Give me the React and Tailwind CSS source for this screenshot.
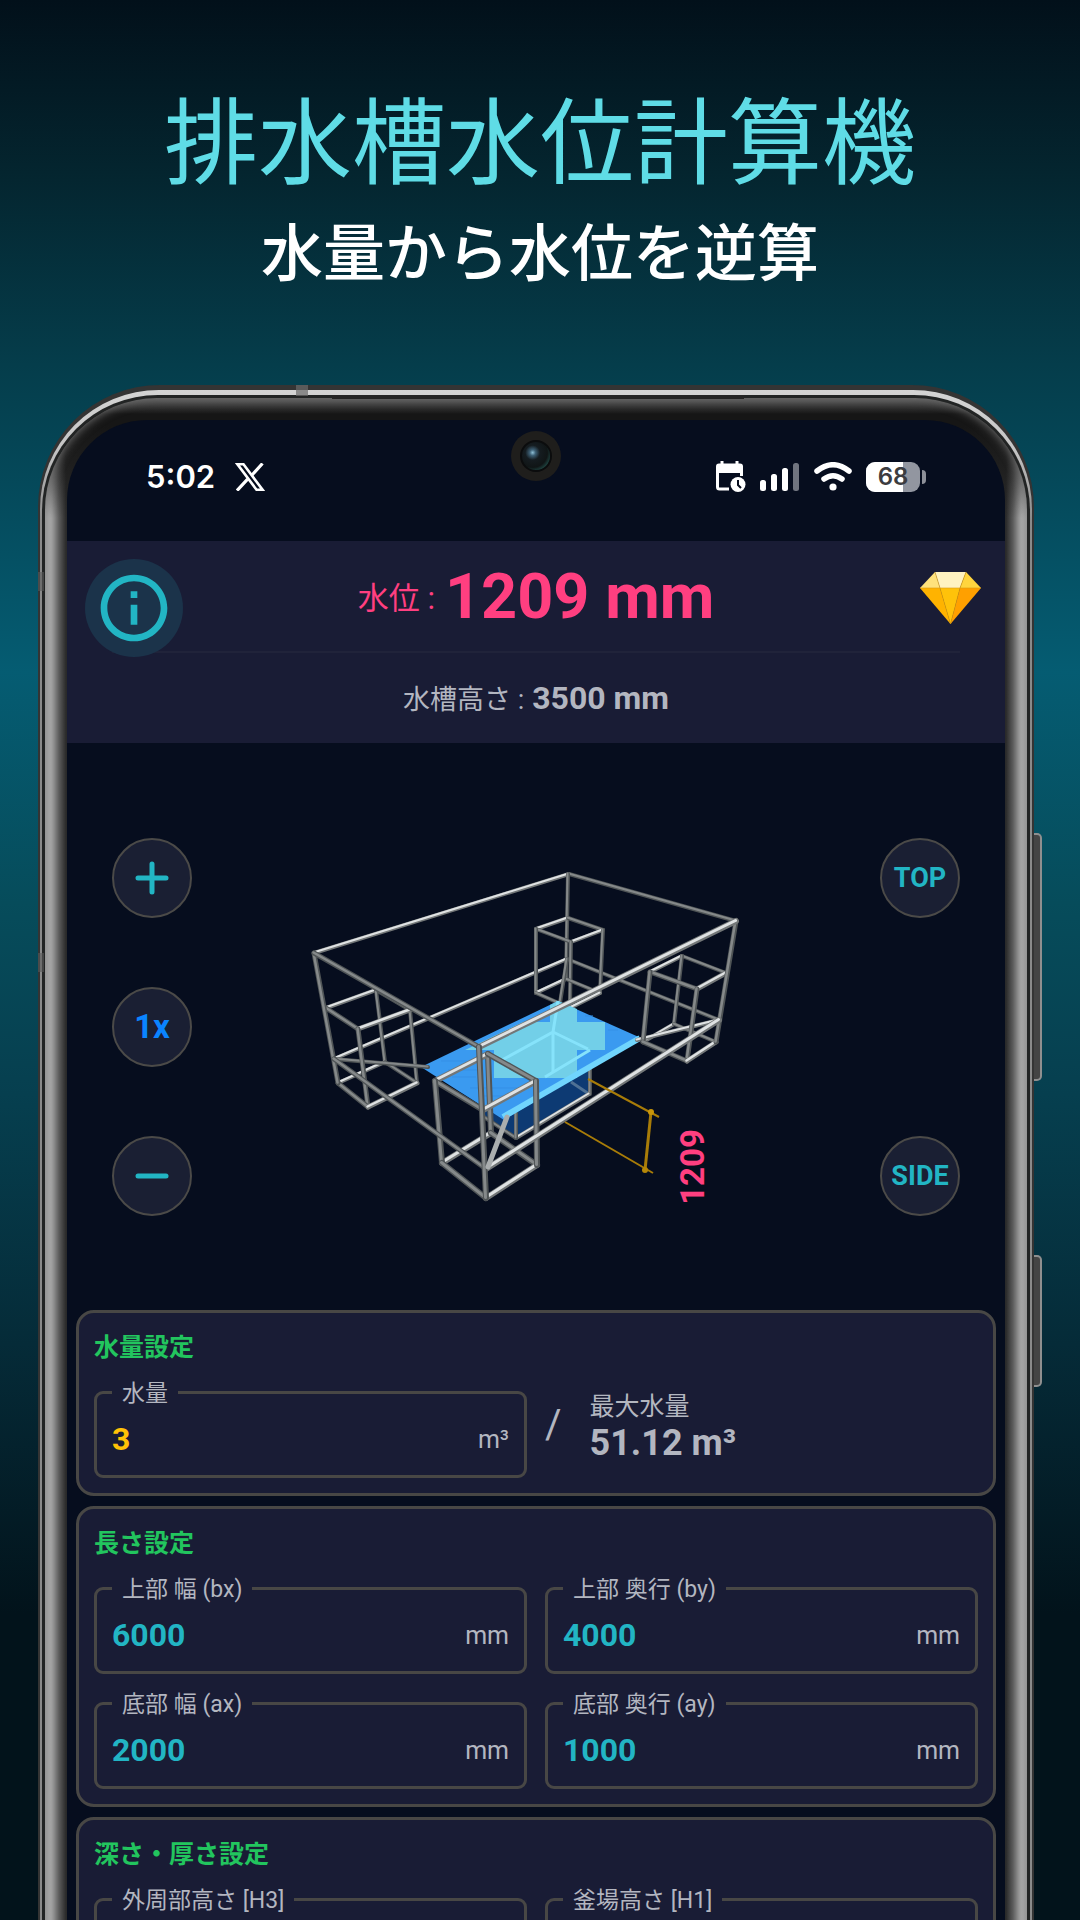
import React, { useState } from 'react';

// [x1, y1, x2, y2] of every pipe of the wireframe, back to front
const BACK_PIPES = [
  [314, 953, 569, 874],
  [569, 874, 736, 921],
  [568, 874, 566, 979],
  [334, 1059, 567, 959],
  [567, 959, 719, 1020],
  // rear pit
  [536, 929, 568, 918],
  [568, 918, 603, 930],
  [603, 930, 571, 942],
  [571, 942, 536, 929],
  [536, 929, 536, 993],
  [603, 930, 600, 993],
  [571, 942, 570, 1006],
  [536, 993, 566, 979],
  [566, 979, 600, 993],
  [536, 993, 570, 1008],
  [600, 993, 570, 1008],
  [567, 959, 560, 1003],
  // left pit
  [326, 1008, 376, 990],
  [376, 990, 410, 1010],
  [376, 990, 385, 1062],
  [410, 1010, 417, 1083],
  [338, 1083, 385, 1062],
  [385, 1062, 417, 1083],
  // right pit
  [650, 972, 682, 956],
  [682, 956, 726, 973],
  [682, 956, 674, 1024],
  [643, 1042, 674, 1024],
  [674, 1024, 716, 1042],
];

const FRONT_PIPES = [
  // left pit
  [326, 1008, 358, 1029],
  [358, 1029, 410, 1010],
  [358, 1029, 368, 1107],
  [338, 1083, 368, 1107],
  [368, 1107, 417, 1083],
  // right pit
  [650, 972, 697, 989],
  [697, 989, 726, 973],
  [650, 972, 643, 1042],
  [697, 989, 687, 1061],
  [643, 1042, 687, 1061],
  [687, 1061, 716, 1042],
  [736, 921, 716, 1042],
  // front pit
  [491, 1133, 488, 1054],
  [442, 1163, 491, 1133],
  [491, 1133, 537, 1165],
  [435, 1081, 488, 1054],
  [488, 1054, 536, 1081],
  [435, 1081, 483, 1110],
  [483, 1110, 536, 1081],
  [435, 1081, 442, 1163],
  [442, 1163, 486, 1198],
  [486, 1198, 537, 1165],
  [536, 1081, 537, 1165],
  // outer box
  [314, 953, 338, 1083],
  [334, 1059, 486, 1169],
  [486, 1169, 719, 1020],
  [314, 953, 479, 1047],
  [479, 1047, 736, 921],
  [479, 1047, 486, 1198],
];

const Pipe = ({ line, width = 5 }) => {
  const [x1, y1, x2, y2] = line;
  const steep = Math.abs(x2 - x1) <= 25 && Math.abs(y2 - y1) > 40;
  const bright = (y2 - y1) * (x2 - x1) < 0 && !steep;
  return (
    <g strokeLinecap="round">
      <line x1={x1} y1={y1} x2={x2} y2={y2} stroke={bright ? '#727677' : '#4f5456'} strokeWidth={width} />
      <line
        x1={x1}
        y1={y1}
        x2={x2}
        y2={y2}
        stroke={bright ? '#dfe2e3' : '#85898a'}
        strokeWidth={width / 2}
        transform="translate(-0.5 -0.5)"
      />
    </g>
  );
};

const TankView = () => (
  <svg viewBox="296 847 480 360" className="w-[480px] h-[360px]" role="img" aria-label="水槽">
    {BACK_PIPES.map((line) => (
      <Pipe key={line.join()} line={line} width={4} />
    ))}

    {/* Water body below the surface */}
    <path d="M484 1104 L590 1062 L590 1094 L516 1139 L484 1117 Z" fill="#0d3a73" />
    <path d="M571 1082 L589 1094" stroke="#4f7194" strokeWidth="3" />
    <Pipe line={[590, 1066, 590, 1094]} width={4} />
    <Pipe line={[516, 1138, 589, 1094]} width={4} />
    <Pipe line={[516, 1138, 484, 1117]} width={4} />
    <Pipe line={[516, 1112, 516, 1138]} width={4} />

    {/* Water surface */}
    <path d="M421 1067 L558 1001 L641 1038 L504 1120 Z" fill="#3a9af0" />
    <path d="M465 1050 L523 1022 L550 1022 L550 1005 L558 1001 L577 1009 V1022 H605 V1050 H577 V1078 H494 V1050 Z" fill="#72cfe8" />
    <g fill="none" stroke="#86e3fb" strokeWidth="3">
      <path d="M558 1001 L553 1032 L502 1060" />
      <path d="M553 1032 L588 1049" />
      <path d="M545 1077 L590 1050" />
      <path d="M553 1032 V1073" />
    </g>
    <path d="M441 1061 h26 M448 1070 h30 M452 1077 h24 M470 1088 h50 M478 1096 h36 M608 1030 h10 M585 1016 h8" stroke="#348fe6" strokeWidth="1" />
    <path d="M503 1117 L640 1038" stroke="#70d5fd" strokeWidth="6" />

    <Pipe line={[334, 1059, 428, 1067]} width={4} />
    <Pipe line={[637, 1040, 719, 1020]} width={4} />
    {FRONT_PIPES.map((line) => (
      <Pipe key={line.join()} line={line} width={line[0] > 430 && line[0] < 540 ? 6 : 5} />
    ))}
    <path d="M488 1167 L507 1117" stroke="#a9adae" strokeWidth="5" strokeLinecap="round" />

    {/* Dimension lines */}
    <g fill="none" stroke="#a87c08" strokeWidth="2">
      <path d="M588 1079 L659 1117" />
      <path d="M565 1122 L653 1173" />
      <path d="M651 1112 L645 1170" strokeWidth="3" />
    </g>
    <circle cx="651" cy="1112" r="3" fill="#c9960a" />
    <circle cx="645" cy="1170" r="3" fill="#b58708" />
    <text
      transform="translate(704 1167) rotate(-90)"
      textAnchor="middle"
      className="font-['Roboto',sans-serif] text-[33px] font-bold fill-[#ff3f80]"
    >
      1209
    </text>
  </svg>
);

const XLogo = () => (
  <svg viewBox="0 0 30 28" className="w-[30px] h-7" fill="none" stroke="#fff" aria-hidden="true">
    <path d="M2.5 1.3 H8.5 L27.5 26.7 H21.5 Z" strokeWidth="2.6" />
    <path d="M27.5 0.5 L16.8 12.3 M12.6 16.2 L2 27.6" strokeWidth="3.2" />
  </svg>
);

const CalendarClock = () => (
  <svg viewBox="0 0 30 31" className="w-[30px] h-[31px]" aria-hidden="true">
    <path d="M6 0 V4 M21 0 V4" stroke="#fff" strokeWidth="3" />
    <path d="M3 2.5 H24 Q27 2.5 27 5.5 V12 H0 V5.5 Q0 2.5 3 2.5 Z" fill="#fff" />
    <path d="M1.5 10 V26 Q1.5 28 3.5 28 H13 M25.5 11 V15" fill="none" stroke="#fff" strokeWidth="3" />
    <circle cx="22" cy="23.5" r="7.5" fill="#fff" />
    <path d="M22 19 V24 L25 27" fill="none" stroke="#070d1e" strokeWidth="2" />
  </svg>
);

const Signal = () => (
  <svg viewBox="0 0 40 28" className="w-10 h-7" aria-hidden="true">
    <rect x="0" y="17" width="6" height="11" rx="2.5" fill="#fff" />
    <rect x="11" y="11" width="6" height="17" rx="2.5" fill="#fff" />
    <rect x="22" y="5" width="6" height="23" rx="2.5" fill="#fff" />
    <rect x="33" y="0" width="6" height="28" rx="2.5" fill="#70747f" />
  </svg>
);

const Wifi = () => (
  <svg viewBox="0 0 38 29" className="w-[38px] h-[29px]" fill="none" stroke="#fff" aria-hidden="true">
    <path d="M3 9 Q19 -3.5 35 9" strokeWidth="5.5" strokeLinecap="round" />
    <path d="M10 17 Q19 10.5 28 17" strokeWidth="5.5" strokeLinecap="round" />
    <circle cx="19" cy="25" r="3.6" fill="#fff" stroke="none" />
  </svg>
);

const Battery = ({ level }) => (
  <div className="flex items-center gap-[2px]">
    <div className="relative flex h-[30px] w-[54px] items-center justify-center overflow-hidden rounded-[9px] bg-[#9296a0]">
      <div className="absolute inset-y-0 left-0 bg-white" style={{ width: `${level}%` }} />
      <span className="relative font-['Inter',sans-serif] text-2xl leading-none font-semibold text-[#3c3c40]">{level}</span>
    </div>
    <div className="h-[14px] w-1 rounded-r-full bg-[#8d9099]" />
  </div>
);

const InfoIcon = () => (
  <svg viewBox="0 0 24 24" className="size-20" fill="#22b5c4" aria-hidden="true">
    <path d="M11 7h2v2h-2zm0 4h2v6h-2zm1-9C6.48 2 2 6.48 2 12s4.48 10 10 10 10-4.48 10-10S17.52 2 12 2m0 18c-4.41 0-8-3.59-8-8s3.59-8 8-8 8 3.59 8 8-3.59 8-8 8" />
  </svg>
);

const GemIcon = () => (
  <svg viewBox="0 0 61 52" className="w-[61px] h-[52px]" aria-hidden="true">
    <path d="M15 0 L0 16 H20 Z" fill="#ffe27c" />
    <path d="M15 0 H46 L40 16 H20 Z" fill="#fff3c0" />
    <path d="M46 0 L61 16 H40 Z" fill="#ffd53e" />
    <path d="M0 16 H20 L30.500 52 Z" fill="#ffb300" />
    <path d="M20 16 H40 L30.500 52 Z" fill="#ffc20a" />
    <path d="M40 16 H61 L30.500 52 Z" fill="#ffa000" />
    <path d="M15 0 L20 16 L30.500 52 L40 16 L46 0 M0 16 H61" fill="none" stroke="#d99a10" strokeWidth="0.600" />
  </svg>
);

const RoundButton = ({ label, className = '', children }) => (
  <button
    type="button"
    aria-label={label}
    className={`flex size-20 items-center justify-center rounded-full border-2 border-[#4b4a48] bg-[#1a1f33] font-bold ${className}`}
  >
    {children}
  </button>
);

const Field = ({ id, label, unit, initial, accent = 'text-[#22b5c4]' }) => {
  const [value, setValue] = useState(initial);
  return (
    <fieldset className="min-w-0 rounded-[9px] border-3 border-[#484745] px-[15px] pt-2 pb-3">
      <legend className="px-[10px] pt-1 text-[23px] leading-[26px] text-[#b3b6c0]">
        <label htmlFor={id}>{label}</label>
      </legend>
      <div className="flex h-12 items-center">
        <input
          id={id}
          inputMode="decimal"
          value={value}
          onChange={(e) => setValue(e.target.value)}
          className={`h-12 w-full min-w-0 flex-1 bg-transparent text-[32px] font-bold outline-none ${accent}`}
        />
        <span className="pt-[2px] text-[25px] text-[#b3b6c0]">{unit}</span>
      </div>
    </fieldset>
  );
};

const Card = ({ title, children }) => (
  <section className="rounded-[18px] border-3 border-[#484745] bg-[#191c35] px-[15px] pt-[17px] pb-[15px]">
    <h2 className="mb-[11px] text-[25px] leading-9 font-bold text-[#22c55e]">{title}</h2>
    {children}
  </section>
);

const StatusBar = () => (
  <div className="flex h-[121px] items-center justify-between px-[79px] pb-2">
    <div className="flex items-center gap-5">
      <span className="font-['Inter',sans-serif] text-[31px] leading-none font-semibold text-white">5:02</span>
      <XLogo />
    </div>
    <div className="flex items-center gap-[14px]">
      <CalendarClock />
      <Signal />
      <Wifi />
      <Battery level={68} />
    </div>
    {/* Front camera */}
    <div className="absolute top-[11px] left-1/2 flex size-[50px] -translate-x-1/2 items-center justify-center rounded-full bg-[#1f1e1c]">
      <div className="size-8 rounded-full border-2 border-[#0b0c0d] bg-[radial-gradient(circle_at_38%_38%,#8fc0d6_0,#3d6075_12%,#151c20_30%,#101516_60%,#1d3f3c_75%,#141a1a_100%)]" />
    </div>
  </div>
);

const ResultHeader = () => (
  <header className="relative bg-[#191c35] px-[45px]">
    <div className="flex h-[110px] items-center justify-center gap-[10px] text-[#ff3f80]">
      <span className="pt-[6px] text-[31px]">水位 :</span>
      <strong className="text-[63px] leading-none">1209 mm</strong>
    </div>
    <div className="h-[2px] bg-[#20233a]" />
    <div className="flex h-[90px] items-center justify-center gap-2 text-[#b3b6c0]">
      <span className="pt-1 text-[27px]">水槽高さ :</span>
      <strong className="text-[32px] leading-none">3500 mm</strong>
    </div>
    <button
      type="button"
      aria-label="情報"
      className="absolute top-[18px] left-[18px] flex size-[98px] items-center justify-center rounded-full bg-[#1b334a]"
    >
      <InfoIcon />
    </button>
    <button type="button" aria-label="プレミアム" className="absolute top-[31px] right-6">
      <GemIcon />
    </button>
  </header>
);

const Viewer = () => (
  <section className="flex h-[567px] items-center justify-between px-[45px]">
    <div className="flex h-[378px] flex-col justify-between">
      <RoundButton label="拡大">
        <svg viewBox="0 0 34 34" className="size-[34px]" stroke="#22b5c4" strokeWidth="5" strokeLinecap="round" aria-hidden="true">
          <path d="M3 17 H31 M17 3 V31" />
        </svg>
      </RoundButton>
      <RoundButton className="text-[33px] text-[#0a84ff]">1x</RoundButton>
      <RoundButton label="縮小">
        <svg viewBox="0 0 34 34" className="size-[34px]" stroke="#22b5c4" strokeWidth="5" strokeLinecap="round" aria-hidden="true">
          <path d="M3 17 H31" />
        </svg>
      </RoundButton>
    </div>
    <TankView />
    <div className="flex h-[378px] flex-col justify-between text-[27px] text-[#22b5c4]">
      <RoundButton className="pt-[2px]">TOP</RoundButton>
      <RoundButton className="pt-[2px]">SIDE</RoundButton>
    </div>
  </section>
);

const Settings = () => (
  <div className="flex flex-col gap-[10px] px-[9px]">
    <Card title="水量設定">
      <div className="grid grid-cols-2 gap-x-[18px]">
        <Field id="volume" label="水量" unit="m³" initial="3" accent="text-[#ffc107]" />
        <div className="flex items-center gap-7 pb-[6px] text-[#b3b6c0]">
          <span className="text-[40px] leading-none">/</span>
          <div>
            <p className="text-[25px] leading-9">最大水量</p>
            <p className="text-[36px] leading-9 font-bold">51.12 m³</p>
          </div>
        </div>
      </div>
    </Card>
    <Card title="長さ設定">
      <div className="grid grid-cols-2 gap-x-[18px] gap-y-[14px]">
        <Field id="bx" label="上部 幅 (bx)" unit="mm" initial="6000" />
        <Field id="by" label="上部 奥行 (by)" unit="mm" initial="4000" />
        <Field id="ax" label="底部 幅 (ax)" unit="mm" initial="2000" />
        <Field id="ay" label="底部 奥行 (ay)" unit="mm" initial="1000" />
      </div>
    </Card>
    <Card title="深さ・厚さ設定">
      <div className="grid grid-cols-2 gap-x-[18px] gap-y-[14px]">
        <Field id="h3" label="外周部高さ [H3]" initial="" />
        <Field id="h1" label="釜場高さ [H1]" initial="" />
      </div>
    </Card>
  </div>
);

const SideKey = ({ className }) => (
  <div className={`absolute -right-2 w-2 rounded-r-[5px] border-2 border-l-0 border-[#8f8f8f] bg-[#444] ${className}`} />
);

// Nested shells: outer rim, polished edge, groove, inner bezel, screen
const Phone = ({ children }) => (
  <div className="relative mr-[46px] ml-[38px]">
    <SideKey className="top-[448px] h-[248px]" />
    <SideKey className="top-[870px] h-[132px]" />
    <div className="rounded-t-[122px] bg-[#343434] px-[2px] pt-[5px]">
      <div className="rounded-t-[119px] bg-[linear-gradient(to_bottom,#d4d4d4_0,#c4c4c4_60px,#8a8a8a_130px)] px-[2px] pt-[5px]">
        <div className="rounded-t-[116px] bg-[#222424] px-[3px] pt-[3px]">
          <div className="rounded-t-[112px] bg-[linear-gradient(to_bottom,#585858_0,#161616_16px,#161616_28px,transparent_120px),linear-gradient(to_right,#c6c6c6_0,#acacac_6px,#5c5c5c_14px,#2a2a2a_21px,#2a2a2a_calc(100%_-_21px),#5c5c5c_calc(100%_-_14px),#acacac_calc(100%_-_6px),#c6c6c6_100%)] px-[22px] pt-[22px] shadow-[inset_0_0_10px_1px_#6e6e6e]">
            <main className="relative overflow-hidden rounded-t-[80px] bg-[#060d1e] pb-10">{children}</main>
          </div>
        </div>
      </div>
    </div>
    {/* Antenna bands and earpiece slot */}
    <div className="absolute top-0 left-[258px] h-[11px] w-3 bg-[#6b6b6b]/70" />
    <div className="absolute top-[187px] left-0 h-[19px] w-[6px] bg-[#5b5b5b]/60" />
    <div className="absolute top-[568px] left-0 h-[19px] w-[6px] bg-[#5b5b5b]/60" />
    <div className="absolute top-[10px] right-[290px] left-[294px] h-1 bg-[#242424]" />
  </div>
);

export default function App() {
  return (
    <div className="h-screen overflow-hidden bg-[linear-gradient(to_bottom,#02101a_0%,#04252f_9%,#053d4b_19%,#055c72_35%,#064c5b_47%,#063f4f_57%,#052b38_70%,#02131b_84%,#02131b_100%)] font-['Roboto','Noto_Sans_CJK_JP',sans-serif]">
      <div className="flex flex-col items-center gap-[35px] pt-[89px] pb-[105px] text-center font-['Noto_Sans_CJK_JP',sans-serif]">
        <h1 className="text-[94px] leading-none text-[#5fdce6]">排水槽水位計算機</h1>
        <p className="text-[62px] leading-none font-medium text-white">水量から水位を逆算</p>
      </div>
      <Phone>
        <StatusBar />
        <ResultHeader />
        <Viewer />
        <Settings />
      </Phone>
    </div>
  );
}
